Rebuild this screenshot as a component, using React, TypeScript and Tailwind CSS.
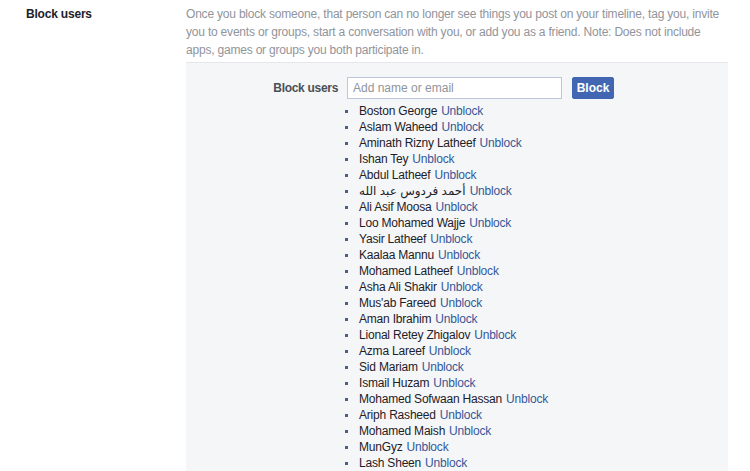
import React from "react";

const names = [
  "Boston George",
  "Aslam Waheed",
  "Aminath Rizny Latheef",
  "Ishan Tey",
  "Abdul Latheef",
  "أحمد فردوس عبد الله",
  "Ali Asif Moosa",
  "Loo Mohamed Wajje",
  "Yasir Latheef",
  "Kaalaa Mannu",
  "Mohamed Latheef",
  "Asha Ali Shakir",
  "Mus'ab Fareed",
  "Aman Ibrahim",
  "Lional Retey Zhigalov",
  "Azma Lareef",
  "Sid Mariam",
  "Ismail Huzam",
  "Mohamed Sofwaan Hassan",
  "Ariph Rasheed",
  "Mohamed Maish",
  "MunGyz",
  "Lash Sheen",
];

export default function App() {
  return (
    <div
      className="w-[750px] h-[471px] overflow-hidden bg-white text-[12px] text-[#1d2129]"
      style={{ fontFamily: '"Liberation Sans", Arial, "DejaVu Sans", sans-serif' }}
    >
      <div className="flex pt-[5px]">
        <div className="w-[186px] pl-[26px] font-bold leading-[18px] text-[#1d2129] tracking-[-0.2px]">Block users</div>
        <div className="w-[542px]">
          <p className="leading-[18px] text-[#90949c] tracking-[-0.2px]">
            Once you block someone, that person can no longer see things you post on your timeline, tag you, invite
            you to events or groups, start a conversation with you, or add you as a friend. Note: Does not include
            apps, games or groups you both participate in.
          </p>
          <div className="mt-[3px] border-t border-[#e5e6e9] bg-[#f5f6f7] pt-[14px] pb-[20px] flex">
            <div className="w-[155px] pr-[3px] text-right font-bold text-[#4b4f56] leading-[22px] tracking-[-0.3px]">
              Block users
            </div>
            <div className="flex-1">
              <div className="flex items-center ml-[6px]">
                <input
                  className="w-[215px] h-[22px] border border-[#bdc7d8] bg-white px-[5px] text-[12px] text-[#1d2129] placeholder:text-[#90949c] outline-none"
                  placeholder="Add name or email"
                />
                <button className="ml-[10px] h-[22px] w-[42px] rounded-[2px] bg-[#4267b2] border border-[#4267b2] text-white font-bold text-[12px] leading-[20px]">
                  Block
                </button>
              </div>
              <ul className="mt-[4px] tracking-[-0.2px]">
                {names.map((n) => (
                  <li key={n} className="flex items-center h-[16px] leading-[16px]">
                    <span className="ml-[4px] w-[3px] h-[3px] bg-[#4a5f8f] mr-[11px] shrink-0" />
                    <span className="text-[#1d2129]">{n}</span>
                    <a className="ml-[4px] text-[#365899] cursor-pointer">Unblock</a>
                  </li>
                ))}
              </ul>
            </div>
          </div>
        </div>
      </div>
    </div>
  );
}
